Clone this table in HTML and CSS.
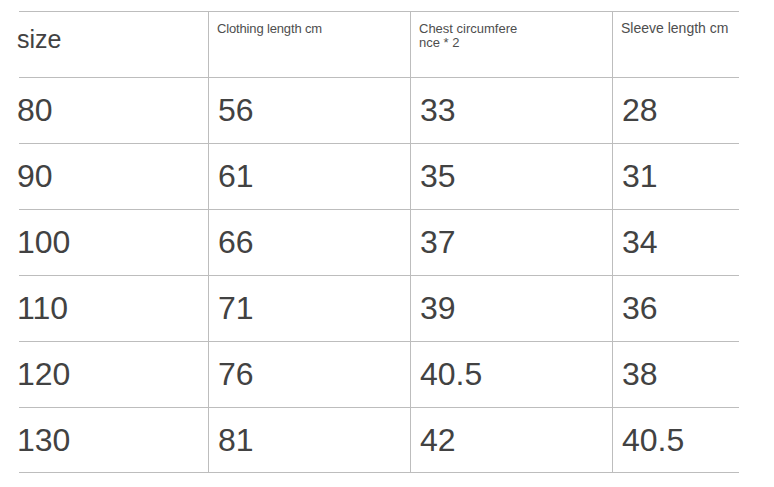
FILE: index.html
```html
<!DOCTYPE html>
<html>
<head>
<meta charset="utf-8">
<link rel="stylesheet" href="styles.css">
</head>
<body>
<div class="chart">
  <div class="row head">
    <div class="cell first"><span class="size-label">size</span></div>
    <div class="cell"><span class="label narrow">Clothing length cm</span></div>
    <div class="cell"><span class="label">Chest circumfere<br>nce * 2</span></div>
    <div class="cell"><span class="label wide">Sleeve length cm</span></div>
  </div>
  <div class="row"><div class="cell first">80</div><div class="cell">56</div><div class="cell">33</div><div class="cell">28</div></div>
  <div class="row"><div class="cell first">90</div><div class="cell">61</div><div class="cell">35</div><div class="cell">31</div></div>
  <div class="row"><div class="cell first">100</div><div class="cell">66</div><div class="cell">37</div><div class="cell">34</div></div>
  <div class="row"><div class="cell first">110</div><div class="cell">71</div><div class="cell">39</div><div class="cell">36</div></div>
  <div class="row"><div class="cell first">120</div><div class="cell">76</div><div class="cell">40.5</div><div class="cell">38</div></div>
  <div class="row last"><div class="cell first">130</div><div class="cell">81</div><div class="cell">42</div><div class="cell">40.5</div></div>
</div>
</body>
</html>
```
FILE: styles.css
```css
html, body {
  margin: 0;
  padding: 0;
  background: #ffffff;
}
body {
  font-family: "Liberation Sans", Arial, sans-serif;
  color: #424242;
}
.chart {
  width: 720px;
  margin: 11px 0 0 19px;
}
.row {
  display: grid;
  grid-template-columns: 189px 202px 202px 127px;
  height: 66px;
  border-top: 1px solid #bdbdbd;
  box-sizing: border-box;
}
.row.last {
  border-bottom: 1px solid #bdbdbd;
}
.cell {
  display: flex;
  align-items: center;
  font-size: 32px;
  padding-left: 9px;
  border-left: 1px solid #bdbdbd;
  white-space: nowrap;
}
.cell.first {
  border-left: none;
  padding-left: 0;
  margin-left: -2px;
}
.head .cell {
  align-items: flex-start;
  padding-left: 8px;
}
.head .cell.first {
  padding-left: 0;
}
.size-label {
  font-size: 25px;
  line-height: 28px;
  padding-top: 13px;
}
.label {
  font-size: 13px;
  line-height: 14px;
  padding-top: 10px;
  color: #4e4e4e;
}
.label.narrow {
  letter-spacing: -0.15px;
}
.label.wide {
  font-size: 14px;
  padding-top: 9px;
}
```
